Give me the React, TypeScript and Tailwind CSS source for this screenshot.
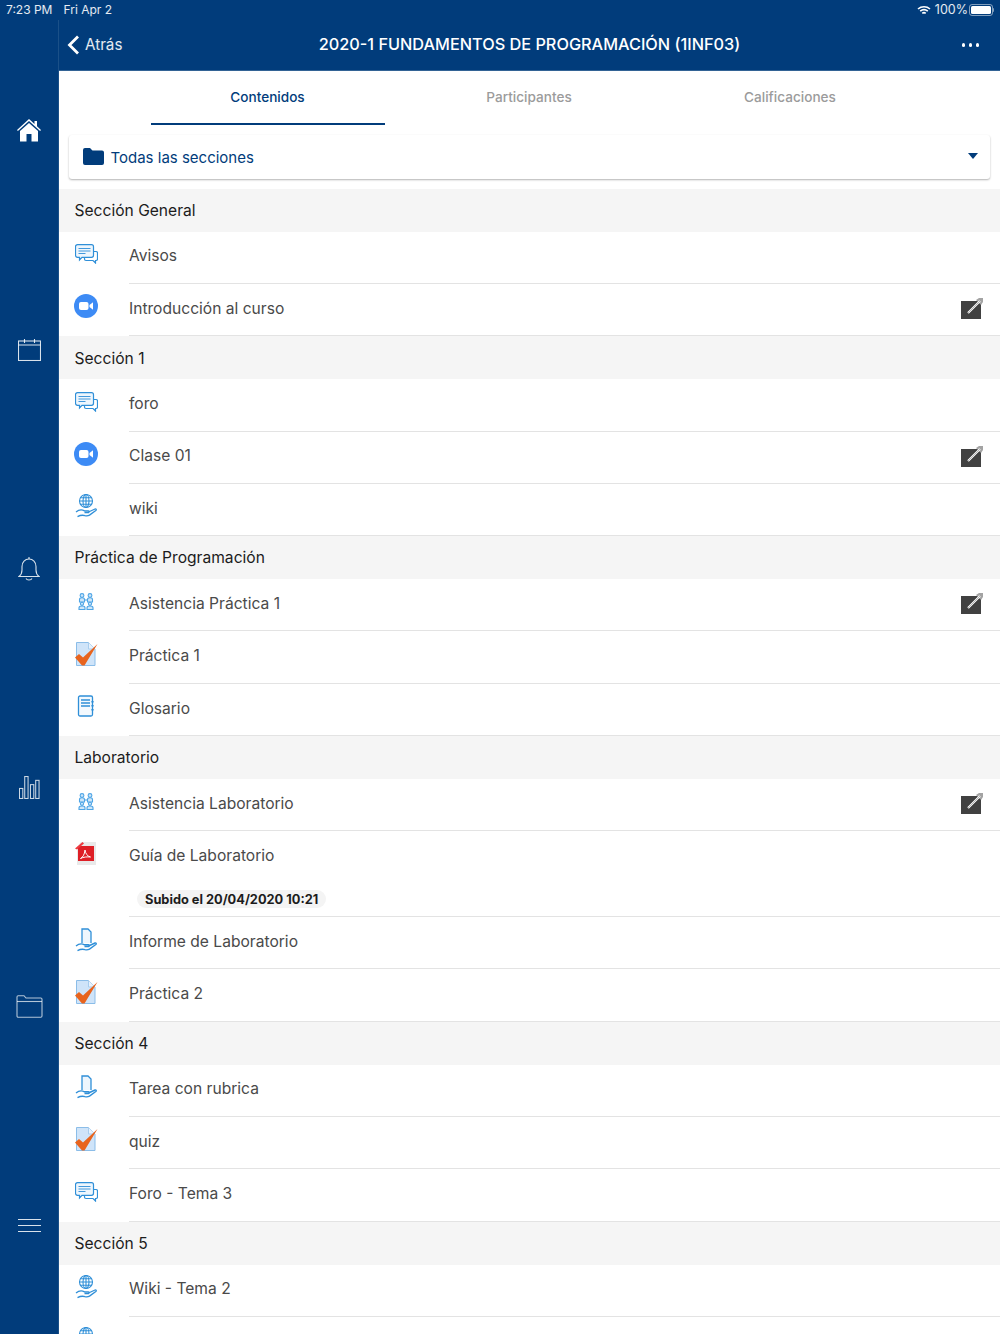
import React from "react";

type Kind = "forum" | "zoom" | "wiki" | "attendance" | "quiz" | "glossary" | "pdf" | "assign";

type Row = { kind: Kind; label: string; edit?: boolean; note?: string };

const sections: { title: string; rows: Row[] }[] = [
    {
        title: "Sección General",
        rows: [
            { kind: "forum", label: "Avisos" },
            { kind: "zoom", label: "Introducción al curso", edit: true },
        ],
    },
    {
        title: "Sección 1",
        rows: [
            { kind: "forum", label: "foro" },
            { kind: "zoom", label: "Clase 01", edit: true },
            { kind: "wiki", label: "wiki" },
        ],
    },
    {
        title: "Práctica de Programación",
        rows: [
            { kind: "attendance", label: "Asistencia Práctica 1", edit: true },
            { kind: "quiz", label: "Práctica 1" },
            { kind: "glossary", label: "Glosario" },
        ],
    },
    {
        title: "Laboratorio",
        rows: [
            { kind: "attendance", label: "Asistencia Laboratorio", edit: true },
            { kind: "pdf", label: "Guía de Laboratorio", note: "Subido el 20/04/2020 10:21" },
            { kind: "assign", label: "Informe de Laboratorio" },
            { kind: "quiz", label: "Práctica 2" },
        ],
    },
    {
        title: "Sección 4",
        rows: [
            { kind: "assign", label: "Tarea con rubrica" },
            { kind: "quiz", label: "quiz" },
            { kind: "forum", label: "Foro - Tema 3" },
        ],
    },
    {
        title: "Sección 5",
        rows: [
            { kind: "wiki", label: "Wiki - Tema 2" },
            { kind: "wiki", label: "" },
        ],
    },
];

const hand =
    "M1 18c3-2.500 6-2.500 8.500-1.200h4c1 0 1 1.700 0 1.700H9.500M13.500 18l6.500-3c1.200-.4 1.600.8.800 1.500l-6.300 4.600c-1.500.8-3 .9-4.500.5-2.700-.8-5-.3-7.500 1";

const ActivityIcon = ({ kind }: { kind: Kind }) => {
    if (kind === "forum") {
        return (
            <svg width="23" height="20" viewBox="0 0 23 20" fill="none">
                <path d="M17 7.500h4a1.500 1.500 0 0 1 1.500 1.500v6a1.500 1.500 0 0 1-1.500 1.500h-.5v2.500l-2.500-2.500h-7a1.500 1.500 0 0 1-1.500-1.500v-1" stroke="#2f8fd8" strokeWidth="1.200" />
                <path d="M2.500.7h14a2 2 0 0 1 2 2v8.600a2 2 0 0 1-2 2H7l-2.500 2.700v-2.700h-2a2 2 0 0 1-2-2V2.700a2 2 0 0 1 2-2z" stroke="#2f8fd8" strokeWidth="1.200" fill="#eef6fd" />
                <path d="M3.500 4.500h12M3.500 7h12M3.500 9.500h7" stroke="#2f8fd8" strokeWidth=".9" />
            </svg>
        );
    }
    if (kind === "zoom") {
        return (
            <svg width="24" height="24" viewBox="0 0 24 24">
                <circle cx="12" cy="12" r="12" fill="#3d8bf5" />
                <rect x="5" y="8" width="9.500" height="8" rx="2" fill="#fff" />
                <path d="M15.500 11l3.500-2.700v7.400L15.500 13z" fill="#fff" />
            </svg>
        );
    }
    if (kind === "wiki") {
        return (
            <svg width="22" height="24" viewBox="0 0 22 24" fill="none" stroke="#2f8fd8" strokeWidth="1.100">
                <circle cx="11" cy="7" r="6.500" />
                <ellipse cx="11" cy="7" rx="3" ry="6.500" />
                <path d="M4.500 7h13M5.500 3.800h11M5.500 10.200h11M11 .5v13" />
                <path d={hand} strokeWidth="1.300" />
            </svg>
        );
    }
    if (kind === "attendance") {
        return (
            <svg width="16" height="17" viewBox="0 0 16 17" fill="#cfe6f8" stroke="#4ea5e6" strokeWidth="1.100">
                <circle cx="4" cy="2.500" r="1.900" />
                <circle cx="12" cy="2.500" r="1.900" />
                <path d="M1.500 9V6.500c0-1 1-1.800 2.500-1.800S6.500 5.500 6.500 6.500V9zM9.500 9V6.500c0-1 1-1.800 2.500-1.800s2.500.8 2.500 1.800V9z" />
                <path d="M6.500 7h3" />
                <circle cx="4" cy="10.800" r="1.600" />
                <circle cx="12" cy="10.800" r="1.600" />
                <path d="M1 16.500v-1.800c0-1 1.300-1.700 3-1.700s3 .7 3 1.700v1.800zM9 16.500v-1.800c0-1 1.300-1.700 3-1.700s3 .7 3 1.700v1.800z" />
            </svg>
        );
    }
    if (kind === "quiz") {
        return (
            <svg width="24" height="24" viewBox="0 0 24 24" fill="none">
                <path d="M2.500 .5h12l6.500 6.500v16.500H2.500z" fill="#cfe4f9" stroke="#8bbde8" strokeWidth="1" />
                <path d="M14.500 .5V7H21" fill="#e8f2fc" stroke="#a8cdee" strokeWidth="1" />
                <path d="M1 15.500L5 12l4 3.500L23.500 2 10.500 23.500H8z" fill="#e8641e" />
            </svg>
        );
    }
    if (kind === "glossary") {
        return (
            <svg width="18" height="22" viewBox="0 0 18 22" fill="none" stroke="#2f8fd8" strokeWidth="1.300">
                <rect x="1.500" y="1" width="14" height="20" rx="1.500" fill="#f3f9fe" />
                <path d="M4 5h9M4 8h9M4 11h9" />
                <path d="M15.500 6v1.500M15.500 10v1.500M15.500 14v1.500" strokeWidth="2.200" />
            </svg>
        );
    }
    if (kind === "pdf") {
        return (
            <svg width="22" height="24" viewBox="0 0 22 24">
                <path d="M6 0h15v23H2V5z" fill="#e9e9e9" />
                <rect x="3" y="4" width="16" height="15" fill="#de1f26" />
                <path d="M0 6.500L7.500 0 9 1.500 2 7.500z" fill="#ee3a40" />
                <path d="M5.500 16.500c2.500-1.500 4-4 4.500-8.500.5 3.500 2 6 5.500 7-3.500-.3-7-.1-10 1.500z" fill="none" stroke="#fff" strokeWidth="1" />
            </svg>
        );
    }
    return (
        <svg width="22" height="24" viewBox="0 0 22 24" fill="none" stroke="#2f8fd8" strokeWidth="1.300">
            <path d="M7 15V1h6l3 3v11" fill="#eef6fd" />
            <path d={hand} strokeWidth="1.400" />
        </svg>
    );
};

const EditIcon = () => (
    <svg width="22" height="21" viewBox="0 0 22 21">
        <rect x="0" y="3" width="20" height="18" fill="#414141" />
        <path d="M15 2l3-2h4v4l-2 3z" fill="#a3a3a3" />
        <path d="M7 15L19 3" stroke="#fff" strokeWidth="2.200" />
        <path d="M7 15L19 3" stroke="#8a8a8a" strokeWidth=".6" />
    </svg>
);

const sideIcons = [
    <svg key="home" width="24" height="23" viewBox="0 0 24 23" fill="#fff">
        <path d="M12 0L0 11l.9 1L12 1.900 23.100 12l.9-1-4-3.700V2h-2.500v3z" />
        <path d="M12 4L3 12v10.500h6.500V15h5v7.500H21V12z" />
    </svg>,
    <svg key="cal" width="23" height="22" viewBox="0 0 23 22" fill="none" stroke="#fff" strokeOpacity=".85" strokeWidth="1.100">
        <rect x=".5" y="2" width="22" height="19.500" />
        <path d="M.5 6h22M6.500 0v4M16.500 0v4" />
    </svg>,
    <svg key="bell" width="22" height="24" viewBox="0 0 22 24" fill="none" stroke="#fff" strokeOpacity=".85" strokeWidth="1.100">
        <path d="M1 19.500c2-1.500 3-3 3-6.500V9.500C4 5 7 2 11 2s7 3 7 7.500V13c0 3.500 1 5 3 6.500z" />
        <path d="M8 21.500c1 2 5 2 6 0M11 0v2" />
    </svg>,
    <svg key="chart" width="21" height="23" viewBox="0 0 22 24" fill="none" stroke="#fff" strokeOpacity=".8" strokeWidth="1.100">
        <rect x=".5" y="13" width="3.500" height="10.500" />
        <rect x="6" y=".5" width="3.500" height="23" />
        <rect x="12" y="9" width="3.500" height="14.500" />
        <rect x="17.500" y="4.500" width="3.500" height="19" />
    </svg>,
    <svg key="folder" width="27" height="23" viewBox="0 0 27 23" fill="none" stroke="#fff" strokeOpacity=".7" strokeWidth="1.100">
        <path d="M1 21V2c0-.8.500-1.300 1.200-1.300H8l2 2.300h14.800c.8 0 1.200.5 1.200 1.200V21c0 .7-.4 1.200-1.200 1.200H2.200C1.500 22.200 1 21.700 1 21z" />
        <path d="M1 6.500h25" />
    </svg>,
    <svg key="menu" width="23" height="15" viewBox="0 0 23 15" fill="none" stroke="#fff" strokeOpacity=".85" strokeWidth="1.100">
        <path d="M0 1.500h23M0 7.500h23M0 13.500h23" />
    </svg>,
];

const App = () => {
    return (
        <div className="h-[1334px] w-[1000px] overflow-hidden bg-[#013c7b] font-['Inter','Noto_Sans',sans-serif] flex flex-col">
            <div className="h-5 shrink-0 flex items-center justify-between pl-[6px] pr-[6px] text-[12px] text-white/90">
                <div className="flex gap-[11px]">
                    <span>7:23 PM</span>
                    <span>Fri Apr 2</span>
                </div>
                <div className="flex items-center gap-[5px]">
                    <svg width="14" height="11" viewBox="0 0 14 11" fill="none" stroke="#fff" strokeWidth="1.600">
                        <path d="M1 4c3.400-3 8.600-3 12 0M3.200 6.200c2.200-1.900 5.400-1.900 7.600 0M5.300 8.300c1-.8 2.400-.8 3.400 0" />
                    </svg>
                    <span className="text-[12.500px] -ml-px">100%</span>
                    <div className="flex items-center -ml-[4px]">
                        <div className="w-[24px] h-[12px] rounded-[3px] border border-white/50 p-px">
                            <div className="w-full h-full rounded-[1.500px] bg-white" />
                        </div>
                        <div className="w-px h-1 bg-white/50 rounded-r" />
                    </div>
                </div>
            </div>

            <div className="flex flex-1 min-h-0">
                <div className="w-[59px] shrink-0 flex flex-col pt-px border-r border-white/10">
                    {sideIcons.map((icon, i) => (
                        <div key={i} className="h-[219px] shrink-0 flex items-center justify-center">
                            {icon}
                        </div>
                    ))}
                </div>

                <div className="flex-1 min-w-0 flex flex-col">
                    <div className="h-[51px] shrink-0 relative flex items-center justify-center pb-px border-b border-white/20">
                        <div className="absolute left-[8px] top-[14px] flex items-center text-white/90 text-[15.200px]">
                            <svg width="13" height="20" viewBox="0 0 13 20" fill="none" stroke="#fff" strokeWidth="2.800">
                                <path d="M11 1.500L2.500 10l8.500 8.500" />
                            </svg>
                            <span className="ml-[5px]">Atrás</span>
                        </div>
                        <span className="text-white text-[16.300px] font-medium">2020-1 FUNDAMENTOS DE PROGRAMACIÓN (1INF03)</span>
                        <div className="absolute right-[21px] top-[23px] flex gap-[3.500px]">
                            <div className="w-[3.500px] h-[3.500px] rounded-full bg-white" />
                            <div className="w-[3.500px] h-[3.500px] rounded-full bg-white" />
                            <div className="w-[3.500px] h-[3.500px] rounded-full bg-white" />
                        </div>
                    </div>

                    <div className="flex-1 min-h-0 bg-white overflow-hidden">
                        <div className="h-[54px] grid grid-cols-[261px_261px_261px] pl-[78.500px] text-[13.600px] font-medium">
                            <div className="ml-[13px] mr-[14px] flex justify-center pt-[16px] border-b-2 border-[#013c7b] h-[54px] text-[#013c7b]">
                                Contenidos
                            </div>
                            <div className="flex justify-center pt-[16px] text-[#9b9b9b]">Participantes</div>
                            <div className="flex justify-center pt-[16px] text-[#9b9b9b]">Calificaciones</div>
                        </div>

                        <div className="ml-[9.500px] mr-[10px] mt-[10px] h-[44px] bg-white rounded-[3px] shadow-[0_1px_2px_rgba(0,0,0,0.3)] flex items-center justify-between pl-[14px] pr-[12px]">
                            <div className="flex items-center gap-[7px] text-[#013c7b] text-[15px]">
                                <svg width="21" height="17" viewBox="0 0 21 17" fill="#013c7b" className="mb-[2px]">
                                    <path d="M0 2a2 2 0 0 1 2-2h5l2.500 2.500H19a2 2 0 0 1 2 2V15a2 2 0 0 1-2 2H2a2 2 0 0 1-2-2z" />
                                </svg>
                                <span className="pt-[3px]">Todas las secciones</span>
                            </div>
                            <div className="w-0 h-0 border-l-[5px] border-r-[5px] border-t-[6px] border-l-transparent border-r-transparent border-t-[#013c7b] mb-[3px]" />
                        </div>

                        <div className="mt-[9.700px]">
                            {sections.map((section) => (
                                <div key={section.title}>
                                    <div className="h-[43px] bg-[#f5f5f5] flex items-center pl-[15.500px] pt-px text-[15.600px] text-[#1c1c1c]">
                                        {section.title}
                                    </div>
                                    {section.rows.map((row, i) => (
                                        <div key={i} className="flex items-start">
                                            <div className="w-[70px] h-[52px] shrink-0 flex items-center justify-center pr-[16px] pb-[7px]">
                                                <ActivityIcon kind={row.kind} />
                                            </div>
                                            <div className={`flex-1 min-w-0 border-b border-[#e3e3e3] ${row.note ? "h-[85.700px]" : "h-[52.300px]"}`}>
                                                <div className="h-[51px] flex items-center justify-between pr-[17px] pb-[2px] text-[15.600px] text-[#4a4a4a]">
                                                    <span>{row.label}</span>
                                                    {row.edit && <EditIcon />}
                                                </div>
                                                {row.note && (
                                                    <div className="ml-[8px] mt-[8px] inline-flex h-[18px] items-center rounded-full bg-[#f4f4f4] px-[8px] text-[12.800px] font-bold text-[#1c1c1c]">
                                                        {row.note}
                                                    </div>
                                                )}
                                            </div>
                                        </div>
                                    ))}
                                </div>
                            ))}
                        </div>
                    </div>
                </div>
            </div>
        </div>
    );
};

export default App;
